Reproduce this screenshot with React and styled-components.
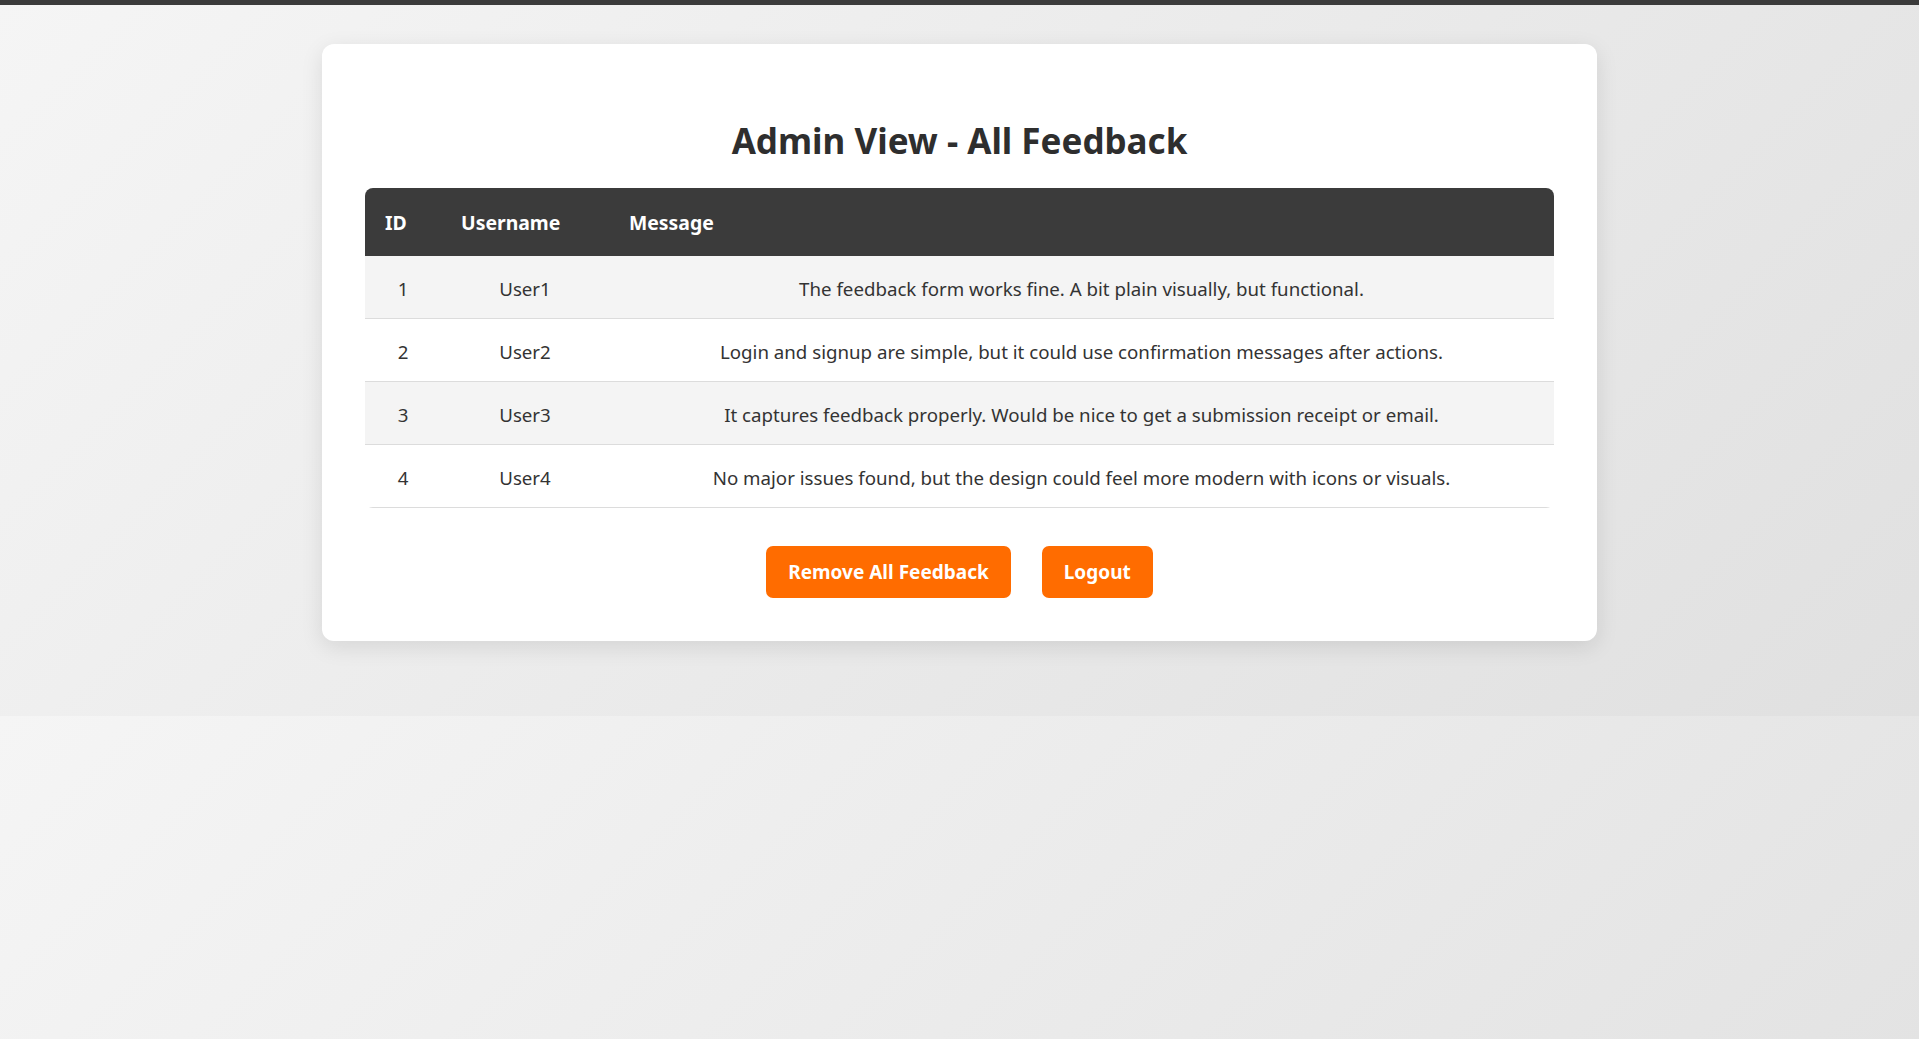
import React from "react";
import styled, { createGlobalStyle } from "styled-components";

const GlobalStyle = createGlobalStyle`
  html {
    background: linear-gradient(135deg, #f5f5f5 0%, #e0e0e0 100%);
  }
  body {
    margin: 0;
    font-family: "Noto Sans", "Open Sans", "Liberation Sans", sans-serif;
    color: #333;
  }
`;

const TopBar = styled.div`
  height: 5px;
  background: #3b3b3b;
`;

const Page = styled.main`
  padding: 39px 0 75px;
  display: flex;
  justify-content: center;
`;

const Card = styled.section`
  box-sizing: border-box;
  width: 1275px;
  padding: 43px;
  background: #fff;
  border-radius: 12px;
  box-shadow: 0 6px 22px rgba(0, 0, 0, 0.1);
  display: flex;
  flex-direction: column;
`;

const Title = styled.h1`
  margin: 30px 0 23px;
  font-size: 35px;
  line-height: 48px;
  font-weight: 700;
  text-align: center;
  color: #2e2e2e;
`;

const TableWrap = styled.div`
  border-radius: 8px;
  overflow: hidden;
`;

const Table = styled.table`
  width: 100%;
  border-collapse: collapse;
  table-layout: fixed;
  font-size: 18.7px;
`;

const Th = styled.th`
  box-sizing: border-box;
  width: ${(p) => p.$w || "auto"};
  background: #3b3b3b;
  color: #fff;
  font-size: 19.4px;
  font-weight: 700;
  text-align: left;
  padding: 21px 20px 19px;
  line-height: 28px;
`;

const Tr = styled.tr`
  background: ${(p) => (p.$striped ? "#f4f4f4" : "#fff")};
  border-bottom: 1px solid #dcdcdc;
`;

const Td = styled.td`
  padding: 19px 20px 15px;
  line-height: 28px;
  text-align: center;
  color: #333;
`;

const ButtonRow = styled.div`
  margin-top: 38px;
  display: flex;
  justify-content: center;
  gap: 31px;
`;

const Button = styled.button`
  font-family: inherit;
  font-size: 19px;
  font-weight: 700;
  line-height: 28px;
  padding: 12px 22px;
  border: none;
  border-radius: 7px;
  background: #ff6c00;
  color: #fff;
  cursor: pointer;
`;

const rows = [
  { id: 1, user: "User1", msg: "The feedback form works fine. A bit plain visually, but functional." },
  { id: 2, user: "User2", msg: "Login and signup are simple, but it could use confirmation messages after actions." },
  { id: 3, user: "User3", msg: "It captures feedback properly. Would be nice to get a submission receipt or email." },
  { id: 4, user: "User4", msg: "No major issues found, but the design could feel more modern with icons or visuals." },
];

export default function App() {
  return (
    <>
      <GlobalStyle />
      <TopBar />
      <Page>
        <Card>
          <Title>Admin View - All Feedback</Title>
          <TableWrap>
            <Table>
              <thead>
                <tr>
                  <Th $w="76px">ID</Th>
                  <Th $w="168px">Username</Th>
                  <Th>Message</Th>
                </tr>
              </thead>
              <tbody>
                {rows.map((r, i) => (
                  <Tr key={r.id} $striped={i % 2 === 0}>
                    <Td>{r.id}</Td>
                    <Td>{r.user}</Td>
                    <Td>{r.msg}</Td>
                  </Tr>
                ))}
              </tbody>
            </Table>
          </TableWrap>
          <ButtonRow>
            <Button>Remove All Feedback</Button>
            <Button>Logout</Button>
          </ButtonRow>
        </Card>
      </Page>
    </>
  );
}
